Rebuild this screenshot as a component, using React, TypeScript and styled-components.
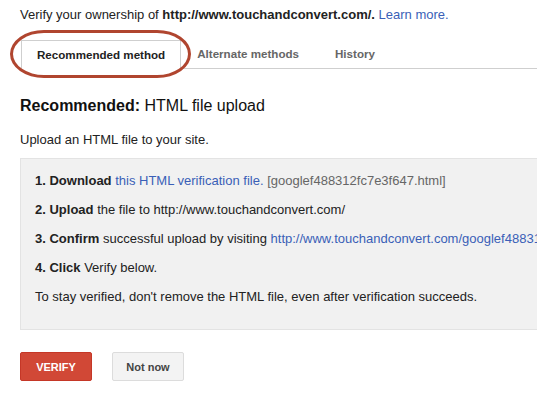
import styled, { createGlobalStyle } from 'styled-components';

const GlobalStyle = createGlobalStyle`
  html, body {
    margin: 0;
    padding: 0;
    background: #fff;
    overflow: hidden;
  }
  body {
    font-family: 'Liberation Sans', Arial, sans-serif;
    color: #222;
  }
`;

const Page = styled.div`
  padding: 7px 0 0 20px;
  width: 517px;
  height: 394px;
  font-size: 13px;
`;

const Intro = styled.div`
  line-height: 16px;
  white-space: nowrap;
`;

const Link = styled.span`
  color: #3a5fb7;
  cursor: pointer;
`;

const Muted = styled.span`
  color: #666;
`;

const TabBar = styled.div`
  display: flex;
  align-items: flex-end;
  margin-top: 16px;
  border-bottom: 1px solid #cfcfcf;
`;

const Tab = styled.div<{ $active?: boolean }>`
  position: relative;
  display: flex;
  align-items: center;
  height: 27px;
  padding: 0 15px;
  margin-left: ${({ $active }) => ($active ? '1px' : '0')};
  margin-right: ${({ $active }) => ($active ? '0' : '4px')};
  margin-bottom: ${({ $active }) => ($active ? '-1px' : '0')};
  font-size: 11.6px;
  font-weight: bold;
  white-space: nowrap;
  color: ${({ $active }) => ($active ? '#222' : '#666')};
  background: ${({ $active }) => ($active ? '#fff' : 'transparent')};
  border: 1px solid ${({ $active }) => ($active ? '#cfcfcf' : 'transparent')};
  border-bottom-color: ${({ $active }) => ($active ? '#fff' : 'transparent')};
`;

const Circle = styled.span`
  position: absolute;
  left: -12px;
  top: -11px;
  right: -11px;
  bottom: -10px;
  border: 3px solid #b0452f;
  border-radius: 34px / 24px;
  pointer-events: none;
`;

const Heading = styled.h2`
  margin: 27px 0 0;
  font-size: 16px;
  font-weight: normal;
  line-height: 20px;
  color: #111;
`;

const Lead = styled.p`
  margin: 16px 0 0;
  line-height: 16px;
`;

const StepsBox = styled.div`
  margin-top: 10px;
  width: 640px;
  padding: 14px 14px 24px;
  background: #f1f1f1;
  border: 1px solid #e3e3e3;
`;

const Step = styled.div`
  line-height: 16px;
  margin-bottom: 13px;
  white-space: nowrap;
  &:last-child {
    margin-bottom: 0;
  }
`;

const Actions = styled.div`
  display: flex;
  gap: 20px;
  margin-top: 22px;
`;

const Button = styled.button<{ $primary?: boolean }>`
  width: 72px;
  height: 29px;
  padding: 0;
  font-family: inherit;
  font-size: 11px;
  font-weight: bold;
  border-radius: 2px;
  cursor: pointer;
  color: ${({ $primary }) => ($primary ? '#fff' : '#444')};
  background: ${({ $primary }) => ($primary ? '#d14836' : '#f3f3f3')};
  border: 1px solid ${({ $primary }) => ($primary ? '#c53727' : '#dcdcdc')};
`;

const tabs = ['Recommended method', 'Alternate methods', 'History'];

const steps = [
  {
    num: '1. Download',
    body: (
      <>
        <Link>this HTML verification file.</Link>{' '}
        <Muted>[googlef488312fc7e3f647.html]</Muted>
      </>
    ),
  },
  { num: '2. Upload', body: <>the file to http://www.touchandconvert.com/</> },
  {
    num: '3. Confirm',
    body: (
      <>
        successful upload by visiting{' '}
        <Link>http://www.touchandconvert.com/googlef488312fc7e3f647.html</Link>{' '}
        in your browser.
      </>
    ),
  },
  { num: '4. Click', body: <>Verify below.</> },
];

export default function App() {
  return (
    <Page>
      <GlobalStyle />
      <Intro>
        Verify your ownership of <b>http://www.touchandconvert.com/.</b>{' '}
        <Link>Learn more.</Link>
      </Intro>

      <TabBar>
        {tabs.map((t, i) => (
          <Tab key={t} $active={i === 0}>
            {t}
            {i === 0 && <Circle />}
          </Tab>
        ))}
      </TabBar>

      <Heading>
        <b>Recommended:</b> HTML file upload
      </Heading>

      <Lead>Upload an HTML file to your site.</Lead>

      <StepsBox>
        {steps.map((s) => (
          <Step key={s.num}>
            <b>{s.num}</b> {s.body}
          </Step>
        ))}
        <Step>To stay verified, don't remove the HTML file, even after verification succeeds.</Step>
      </StepsBox>

      <Actions>
        <Button $primary>VERIFY</Button>
        <Button>Not now</Button>
      </Actions>
    </Page>
  );
}
